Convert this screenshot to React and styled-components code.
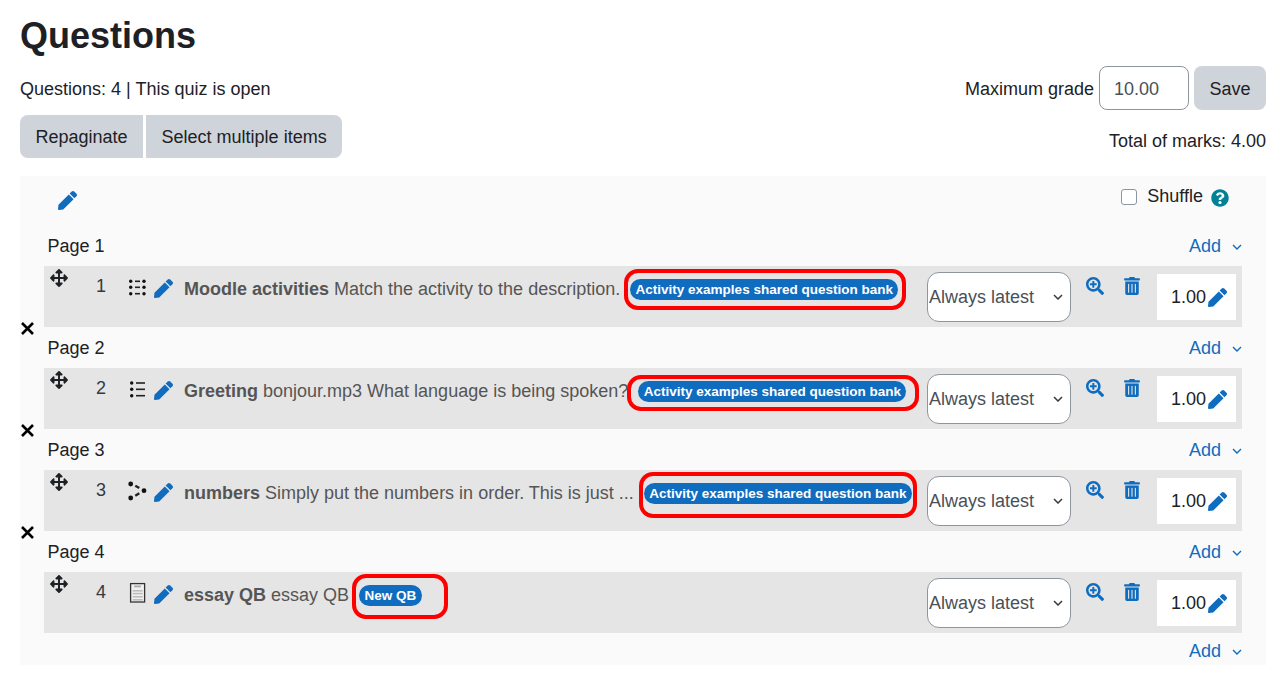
import styled, { createGlobalStyle } from "styled-components";
import { FaArrowsAlt, FaPen, FaSearchPlus, FaTrashAlt, FaQuestionCircle } from "react-icons/fa";

const GlobalStyle = createGlobalStyle`
  body {
    margin: 0;
    background: #fff;
    font-family: "Liberation Sans", Arial, sans-serif;
    font-size: 18px;
    line-height: 1.5;
    color: #1d2125;
  }
`;

const Page = styled.div`
  padding: 0 16px 0 20px;
`;

const Top = styled.div`
  display: flex;
  justify-content: space-between;
  height: 176px;
`;

const Heading = styled.h1`
  margin: 14px 0 0;
  font-size: 36px;
  line-height: 44px;
  font-weight: 700;
`;

const Status = styled.div`
  margin-top: 18px;
  line-height: 26px;
`;

const ButtonRow = styled.div`
  display: flex;
  gap: 3px;
  margin-top: 13px;
`;

const Button = styled.button`
  height: ${(p) => p.$h}px;
  padding: 2px 15.5px 0;
  border: 0;
  border-radius: ${(p) => p.$radius || "8px"};
  background: #ced4da;
  color: #1d2125;
  font: inherit;
`;

const Right = styled.div`
  display: flex;
  flex-direction: column;
  align-items: flex-end;
  padding-top: 66px;
`;

const GradeForm = styled.div`
  display: flex;
  align-items: center;
`;

const GradeLabel = styled.span`
  margin-top: 2px;
`;

const GradeInput = styled.input`
  width: 90px;
  height: 44px;
  box-sizing: border-box;
  margin: 0 5px;
  padding: 2px 14px 0;
  border: 1px solid #8f959e;
  border-radius: 8px;
  color: #495057;
  font: inherit;
`;

const Total = styled.div`
  margin-top: 18px;
  line-height: 26px;
`;

const Panel = styled.div`
  position: relative;
  padding: 0 24px;
  background: #fafafa;
  height: 489px;
`;

const SectionHead = styled.div`
  display: flex;
  justify-content: space-between;
  align-items: flex-start;
  height: 49px;
  padding-right: 13px;
`;

const EditTitle = styled.span`
  margin: 15px 0 0 14px;
  color: #0f6cbf;
  font-size: 19px;
  line-height: 19px;
  display: flex;
`;

const ShuffleBox = styled.label`
  display: flex;
  align-items: center;
  margin-top: 7px;
`;

const Check = styled.span`
  width: 16px;
  height: 16px;
  box-sizing: border-box;
  margin: 1px 10px 0 0;
  border: 1.5px solid #8f959e;
  border-radius: 3px;
  background: #fff;
`;

const Help = styled.span`
  display: flex;
  margin: 2px 0 0 8px;
  color: #008196;
  font-size: 18px;
`;

const PageHead = styled.div`
  display: flex;
  justify-content: space-between;
  align-items: center;
  height: 41px;
  padding: 1px 0 0 3.5px;
  box-sizing: border-box;
`;

const AddLink = styled.a`
  display: flex;
  align-items: center;
  gap: 11px;
  color: #0f6cbf;
`;

const Chevron = styled.svg`
  width: 10px;
  height: 6px;
  margin-top: 1px;
`;

const LastAdd = styled.div`
  display: flex;
  justify-content: flex-end;
  align-items: center;
  height: 32px;
  padding-top: 1px;
  box-sizing: border-box;
  margin-top: 2px;
`;

const Row = styled.div`
  position: relative;
  display: flex;
  align-items: flex-start;
  height: 61px;
  background: #e5e5e5;
`;

const Move = styled.span`
  width: 38px;
  display: flex;
  justify-content: flex-start;
  padding: 3px 0 0 6px;
  box-sizing: border-box;
  font-size: 18px;
  color: #1d2125;
`;

const Num = styled.span`
  width: 47px;
  padding: 7px 0 0 14px;
  box-sizing: border-box;
  line-height: 26px;
  color: #343a40;
`;

const TypeIcon = styled.svg`
  width: 18px;
  height: 18px;
  margin: 12px 7px 0 0;
  flex: none;
  overflow: visible;
`;

const EditIcon = styled.span`
  display: flex;
  color: #0f6cbf;
  font-size: 19px;
  margin: 13px 11px 0 0;
`;

const Name = styled.div`
  flex: 1;
  display: flex;
  align-items: flex-start;
  padding-top: 10px;
  line-height: 26px;
  color: #555;
  white-space: nowrap;
  b {
    margin-right: 5px;
  }
`;

const BadgeWrap = styled.span`
  position: relative;
  display: inline-flex;
  margin-left: ${(p) => p.$gap}px;
  margin-top: 3px;
`;

const Badge = styled.span`
  display: inline-block;
  padding: 0 5.4px;
  border-radius: 11px;
  background: #0f6cbf;
  color: #fff;
  font-size: 13.5px;
  font-weight: 700;
  line-height: 21px;
`;

const Ring = styled.span`
  position: absolute;
  top: ${(p) => p.$t}px;
  bottom: ${(p) => p.$b}px;
  left: ${(p) => p.$l}px;
  right: ${(p) => p.$r}px;
  border: 4px solid #f00;
  border-radius: 14px;
`;

const chevronBg = encodeURIComponent(
  '<svg xmlns="http://www.w3.org/2000/svg" width="10" height="6" viewBox="0 0 10 6"><path d="M1 1l4 4 4-4" fill="none" stroke="#343a40" stroke-width="1.5"/></svg>'
);

const VersionSelect = styled.select`
  appearance: none;
  width: 144px;
  height: 50px;
  margin: 6px 0 0 1px;
  padding: 0 1px;
  border: 1px solid #8f959e;
  border-radius: 12px;
  background: #fff url("data:image/svg+xml,${chevronBg}") no-repeat right 7px center;
  color: #495057;
  font: inherit;
`;

const Action = styled.span`
  display: flex;
  color: #0f6cbf;
  font-size: 18px;
  margin: 11px 0 0 ${(p) => p.$ml}px;
`;

const Grade = styled.div`
  display: flex;
  align-items: center;
  justify-content: flex-end;
  width: 79px;
  height: 46px;
  box-sizing: border-box;
  margin: 8px 6px 0 16px;
  padding-right: 9px;
  background: #fff;
  gap: 2px;
  color: #1d2125;
  svg {
    color: #0f6cbf;
    font-size: 19px;
  }
`;

const BreakMark = styled.svg`
  position: absolute;
  left: -23px;
  top: 56px;
  width: 13px;
  height: 13px;
`;

const dot = (cx, cy, r = 1.7) => <circle key={`${cx}-${cy}`} cx={cx} cy={cy} r={r} fill="#111" />;

const MatchIcon = () => (
  <TypeIcon viewBox="0 0 18 18">
    {[3.3, 9.3, 15.7].map((y) => (
      <g key={y}>
        {dot(1.7, y)}
        <rect x="6" y={y - 0.8} width="5" height="1.6" fill="#222" />
        {dot(15, y)}
      </g>
    ))}
  </TypeIcon>
);

const ChoiceIcon = () => (
  <TypeIcon viewBox="0 0 18 18">
    {[3, 9.3, 15.7].map((y) => (
      <g key={y}>
        {dot(2.7, y)}
        <rect x="7" y={y - 0.8} width="9" height="1.6" fill="#222" />
      </g>
    ))}
  </TypeIcon>
);

const OrderIcon = () => (
  <TypeIcon viewBox="0 0 18 18">
    <path d="M6.3 3.7l4 2.3M6.3 13.7l4-2.4" stroke="#222" strokeWidth="2.4" fill="none" />
    {dot(1.7, 2, 2.4)}
    {dot(15, 8.7, 2.4)}
    {dot(1.7, 16, 2.4)}
  </TypeIcon>
);

const EssayIcon = () => (
  <TypeIcon viewBox="0 0 18 18">
    <rect x="1.6" y="-0.4" width="14" height="18.4" fill="#f1f1f1" stroke="#333" strokeWidth="1.3" />
    <rect x="5" y="1.5" width="7" height="1.8" fill="#aaa" />
    {[6, 8.8, 12, 15].map((y) => (
      <rect key={y} x="3.7" y={y} width="10" height="1.6" fill="#bdbdbd" />
    ))}
  </TypeIcon>
);

const questions = [
  {
    n: 1,
    icon: <MatchIcon />,
    name: "Moodle activities",
    text: "Match the activity to the description.",
    badge: "Activity examples shared question bank",
    gap: 10,
    ring: { t: -10, b: -10, l: -6, r: -8 },
  },
  {
    n: 2,
    icon: <ChoiceIcon />,
    name: "Greeting",
    text: "bonjour.mp3 What language is being spoken?",
    badge: "Activity examples shared question bank",
    gap: 10,
    ring: { t: -6, b: -9, l: -11, r: -13 },
  },
  {
    n: 3,
    icon: <OrderIcon />,
    name: "numbers",
    text: "Simply put the numbers in order. This is just ...",
    badge: "Activity examples shared question bank",
    gap: 10,
    ring: { t: -11, b: -14, l: -5, r: -5 },
  },
  {
    n: 4,
    icon: <EssayIcon />,
    name: "essay QB",
    text: "essay QB",
    badge: "New QB",
    gap: 10,
    ring: { t: -11, b: -13, l: -7, r: -26 },
  },
];

const Add = () => (
  <AddLink>
    Add
    <Chevron viewBox="0 0 10 6">
      <path d="M1 1l4 4 4-4" fill="none" stroke="#0f6cbf" strokeWidth="1.4" />
    </Chevron>
  </AddLink>
);

export default function App() {
  return (
    <Page>
      <GlobalStyle />
      <Top>
        <div>
          <Heading>Questions</Heading>
          <Status>Questions: 4 | This quiz is open</Status>
          <ButtonRow>
            <Button $h={43} $radius="8px 0 0 8px">Repaginate</Button>
            <Button $h={43} $radius="0 8px 8px 0">Select multiple items</Button>
          </ButtonRow>
        </div>
        <Right>
          <GradeForm>
            <GradeLabel>Maximum grade</GradeLabel>
            <GradeInput defaultValue="10.00" />
            <Button $h={44}>Save</Button>
          </GradeForm>
          <Total>Total of marks: 4.00</Total>
        </Right>
      </Top>
      <Panel>
        <SectionHead>
          <EditTitle><FaPen /></EditTitle>
          <ShuffleBox>
            <Check />
            Shuffle
            <Help><FaQuestionCircle /></Help>
          </ShuffleBox>
        </SectionHead>
        {questions.map((q) => (
          <div key={q.n}>
            <PageHead>
              <span>Page {q.n}</span>
              <Add />
            </PageHead>
            <Row>
              <Move><FaArrowsAlt /></Move>
              <Num>{q.n}</Num>
              {q.icon}
              <EditIcon><FaPen /></EditIcon>
              <Name>
                <b>{q.name}</b> {q.text}
                <BadgeWrap $gap={q.gap}>
                  <Badge>{q.badge}</Badge>
                  <Ring $t={q.ring.t} $b={q.ring.b} $l={q.ring.l} $r={q.ring.r} />
                </BadgeWrap>
              </Name>
              <VersionSelect defaultValue="latest">
                <option value="latest">Always latest</option>
              </VersionSelect>
              <Action $ml={15}><FaSearchPlus /></Action>
              <Action $ml={19}><FaTrashAlt /></Action>
              <Grade>1.00<FaPen /></Grade>
              {q.n < 4 && (
                <BreakMark viewBox="0 0 13 13">
                  <path d="M1 1l11 11M12 1L1 12" stroke="#000" strokeWidth="2.6" />
                </BreakMark>
              )}
            </Row>
          </div>
        ))}
        <LastAdd><Add /></LastAdd>
      </Panel>
    </Page>
  );
}
